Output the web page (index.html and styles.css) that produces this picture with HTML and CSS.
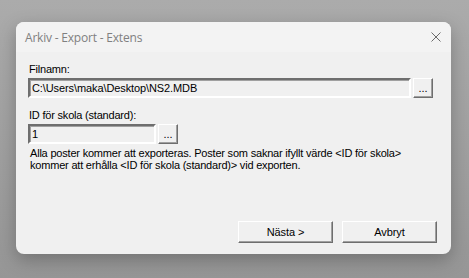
FILE: index.html
```html
<!DOCTYPE html>
<html lang="sv">

<head>
  <meta charset="UTF-8" />
  <meta name="viewport" content="width=device-width, initial-scale=1.0" />
  <title>Arkiv - Export - Extens</title>
  <link rel="stylesheet" href="styles.css">
</head>

<body>
  <div class="dialog">
    <div class="titlebar">
      <span class="title">Arkiv - Export - Extens</span>
      <button class="close" aria-label="Stäng">
        <svg width="10" height="10" viewBox="0 0 10 10">
          <path d="M0.5 0.5 L9.5 9.5 M9.5 0.5 L0.5 9.5" stroke="#6b6b6b" stroke-width="1" fill="none" />
        </svg>
      </button>
    </div>
    <div class="content">
      <label class="field-label">Filnamn:</label>
      <div class="field-row">
        <input class="field wide" type="text" value="C:\Users\maka\Desktop\NS2.MDB" />
        <button class="browse">...</button>
      </div>

      <label class="field-label second">ID för skola (standard):</label>
      <div class="field-row">
        <input class="field narrow" type="text" value="1" />
        <button class="browse">...</button>
      </div>

      <p class="info">Alla poster kommer att exporteras. Poster som saknar ifyllt värde &lt;ID för skola&gt;
        kommer att erhålla &lt;ID för skola (standard)&gt; vid exporten.</p>

      <div class="actions">
        <button class="btn">Nästa &gt;</button>
        <button class="btn">Avbryt</button>
      </div>
    </div>
  </div>
</body>

</html>
```

FILE: styles.css
```css
* {
  box-sizing: border-box;
}

body {
  margin: 0;
  height: 278px;
  overflow: hidden;
  background: linear-gradient(#ababab, #969696);
  font-family: "Liberation Sans", Arial, sans-serif;
}

.dialog {
  width: 435px;
  height: 232px;
  margin: 22px 0 0 16px;
  background: #f0f0f0;
  border-radius: 8px;
  overflow: hidden;
  display: flex;
  flex-direction: column;
  box-shadow: 0 6px 18px rgba(0, 0, 0, 0.25);
}

.titlebar {
  height: 30px;
  flex: none;
  background: #f3f3f3;
  display: flex;
  align-items: center;
  justify-content: space-between;
  padding: 0 10px 0 9px;
}

.title {
  font-family: "Open Sans", "Noto Sans", sans-serif;
  font-size: 12px;
  letter-spacing: -0.2px;
  color: #808080;
}

.close {
  appearance: none;
  border: none;
  background: none;
  padding: 0;
  width: 10px;
  height: 10px;
  display: block;
}

.close svg {
  display: block;
}

.content {
  flex: 1;
  display: flex;
  flex-direction: column;
  padding: 11px 14px 11px 12px;
  font-size: 11px;
  letter-spacing: -0.2px;
  color: #000;
}

.field-label {
  display: block;
  line-height: 13px;
  margin: 0 0 2px 1px;
}

.field-label.second {
  margin-top: 11px;
}

.field-row {
  display: flex;
  align-items: flex-start;
  gap: 2px;
}

.field {
  height: 20px;
  padding: 0 2px;
  font: inherit;
  letter-spacing: -0.1px;
  color: #000;
  background: #f0f0f0;
  border: 2px solid;
  border-color: #6e6e6e #ffffff #ffffff #6e6e6e;
  box-shadow: inset 1px 1px 0 #a0a0a0;
  outline: none;
}

.field.wide {
  width: 383px;
}

.field.narrow {
  width: 128px;
}

.browse {
  appearance: none;
  width: 20px;
  height: 20px;
  padding: 0 0 3px;
  font: inherit;
  line-height: 1;
  color: #000;
  background: #f0f0f0;
  border: 1px solid;
  border-color: #ffffff #6e6e6e #6e6e6e #ffffff;
  box-shadow: inset -1px -1px 0 #a0a0a0;
  display: flex;
  align-items: flex-end;
  justify-content: center;
}

.info {
  margin: 3px 0 0 2px;
  line-height: 12px;
}

.actions {
  margin-top: auto;
  display: flex;
  justify-content: flex-end;
  gap: 9px;
}

.btn {
  appearance: none;
  width: 95px;
  height: 22px;
  padding: 0;
  font: inherit;
  font-size: 11px;
  letter-spacing: -0.1px;
  color: #000;
  background: #f0f0f0;
  border: 1px solid;
  border-color: #ffffff #6e6e6e #6e6e6e #ffffff;
  box-shadow: inset -1px -1px 0 #a0a0a0;
}
```
